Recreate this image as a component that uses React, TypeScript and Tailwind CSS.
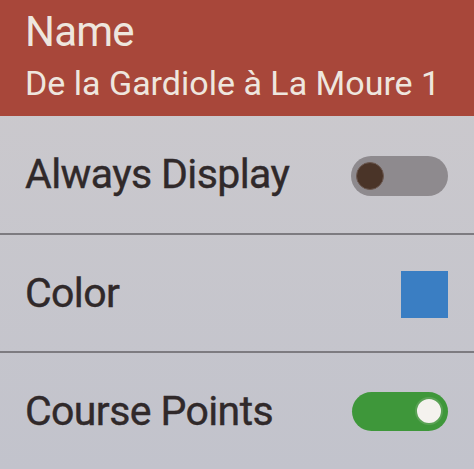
import React from "react";

function Row({ label, children, border }: { label: string; children: React.ReactNode; border?: boolean }) {
  return (
    <div
      className={`flex items-center justify-between pl-[25px] pr-[26px] ${
        border ? "h-[118px] border-t-2 border-[#7d7b80]" : "h-[117px]"
      }`}
    >
      <span className="text-[41px] leading-none text-[#30292a] tracking-[-0.6px] [-webkit-text-stroke:0.4px_#30292a]">
        {label}
      </span>
      {children}
    </div>
  );
}

export default function App() {
  return (
    <div
      className="w-[474px] h-[469px] overflow-hidden flex flex-col bg-gradient-to-b from-[#cdcacd] to-[#c2c3cc]"
      style={{ fontFamily: "Roboto, 'Noto Sans', sans-serif" }}
    >
      <div className="h-[116px] shrink-0 bg-[#a8473a] pl-[25px] pt-[11px] flex flex-col text-[#eee6de]">
        <span className="text-[42px] leading-none tracking-[-0.8px]">Name</span>
        <span className="text-[34px] leading-none mt-[13px]">De la Gardiole à La Moure 1</span>
      </div>
      <Row label="Always Display">
        <div className="w-[97px] h-[40px] rounded-full bg-[#8e8a8e] flex items-center pl-[5px] mt-[2px]">
          <div className="w-[28px] h-[28px] rounded-full bg-[#4a3428] border border-[#6b5850]" />
        </div>
      </Row>
      <Row label="Color" border>
        <div className="w-[47px] h-[47px] bg-[#3a7ec3] mt-[2px]" />
      </Row>
      <Row label="Course Points" border>
        <div className="w-[96px] h-[39px] rounded-full bg-[#3e973a] flex items-center justify-end pr-[5px]">
          <div className="w-[28px] h-[28px] rounded-full bg-[#f4f2ee] border-2 border-[#5aa255]" />
        </div>
      </Row>
    </div>
  );
}
